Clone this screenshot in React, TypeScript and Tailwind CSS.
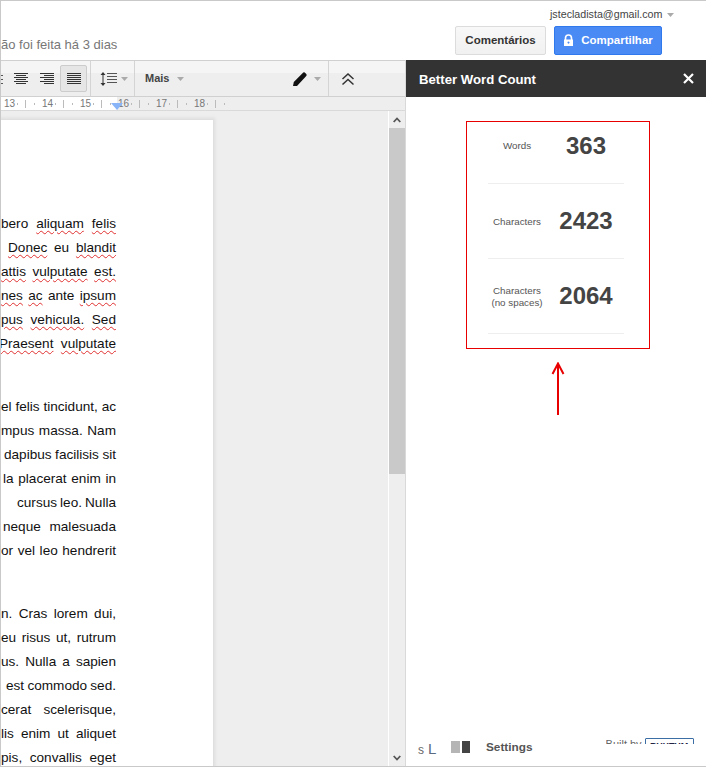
type Line = { pl: string; words: string[] };

// "~" marks a word the spell checker flagged
const paragraphs: Line[][] = [
  [
    { pl: "pl-0", words: ["bero", "~aliquam", "~felis"] },
    { pl: "pl-[7px]", words: ["~Donec", "eu", "~blandit"] },
    { pl: "pl-0", words: ["~attis", "~vulputate", "~est."] },
    { pl: "pl-0", words: ["~nes", "~ac", "ante", "~ipsum"] },
    { pl: "pl-0", words: ["~pus", "~vehicula.", "~Sed"] },
    { pl: "-ml-[2px]", words: ["~Praesent", "~vulputate"] },
  ],
  [
    { pl: "pl-0", words: ["el", "felis", "tincidunt,", "ac"] },
    { pl: "pl-0", words: ["mpus", "massa.", "Nam"] },
    { pl: "pl-[3px]", words: ["dapibus", "facilisis", "sit"] },
    { pl: "pl-[2px]", words: ["la", "placerat", "enim", "in"] },
    { pl: "pl-[16px]", words: ["cursus", "leo.", "Nulla"] },
    { pl: "pl-[2px]", words: ["neque", "malesuada"] },
    { pl: "pl-0", words: ["or", "vel", "leo", "hendrerit"] },
  ],
  [
    { pl: "pl-0", words: ["n.", "Cras", "lorem", "dui,"] },
    { pl: "pl-0", words: ["eu", "risus", "ut,", "rutrum"] },
    { pl: "pl-0", words: ["us.", "Nulla", "a", "sapien"] },
    { pl: "pl-[5px]", words: ["est", "commodo", "sed."] },
    { pl: "pl-0", words: ["cerat", "scelerisque,"] },
    { pl: "pl-0", words: ["lis", "enim", "ut", "aliquet"] },
    { pl: "pl-0", words: ["pis,", "convallis", "eget"] },
  ],
];

const stats = [
  { label: ["Words"], value: "363" },
  { label: ["Characters"], value: "2423" },
  { label: ["Characters", "(no spaces)"], value: "2064" },
];

function Caret({ className = "" }: { className?: string }) {
  return (
    <svg width="7" height="4" viewBox="0 0 7 4" className={className}>
      <path d="M0 0h7L3.500 4z" fill="#aaa" />
    </svg>
  );
}

function AlignIcon({ widths }: { widths: [number, number][] }) {
  return (
    <svg width="14" height="12" viewBox="0 0 14 12" shapeRendering="crispEdges">
      {widths.map(([x, w], i) => (
        <rect key={i} x={x} y={i * 2} width={w} height="1" fill="#333" />
      ))}
    </svg>
  );
}

export default function App() {
  return (
    <div className="w-[706px] h-[767px] flex flex-col overflow-hidden bg-white border-t border-l border-b border-[#c9c9c9] font-['Liberation_Sans',Arial,sans-serif]">
      <header className="h-[59px] shrink-0 flex justify-between">
        <div className="pt-[36px] text-[13px] leading-[15px] text-[#777] whitespace-nowrap">ão foi feita há 3 dias</div>
        <div className="w-[251px] shrink-0 flex flex-col">
          <div className="h-[25px] pt-[7px] pl-[95px] flex items-start gap-[5px] text-[10.700px] leading-[13px] text-[#444]">
            <span>jstecladista@gmail.com</span>
            <Caret className="mt-[5px]" />
          </div>
          <div className="flex gap-[8px]">
            <button className="w-[91px] h-[29px] rounded-[2px] border border-[#dcdcdc] bg-[linear-gradient(#f8f8f8,#f1f1f1)] text-[11.500px] font-bold text-[#333]">Comentários</button>
            <button className="w-[108px] h-[29px] rounded-[2px] border border-[#3079ed] bg-[#4a8af4] text-[11.500px] font-bold text-white flex items-center justify-center gap-[7px]">
              <svg width="11" height="13" viewBox="0 0 11 13">
                <path d="M2.500 6V4a3 3 0 0 1 6 0v2" fill="none" stroke="#fff" strokeWidth="1.600" />
                <path d="M1 5.500h9V12H1z M5.500 7.500a1 1 0 1 0 .01 0z" fill="#fff" fillRule="evenodd" />
              </svg>
              Compartilhar
            </button>
          </div>
        </div>
      </header>

      <div className="flex-1 flex min-h-0">
        <div className="w-[405px] shrink-0 flex flex-col border-r border-[#d9d9d9]">
          <div className="h-[37px] shrink-0 flex items-center border-t border-b border-[#d0d0d0] bg-[linear-gradient(#f5f5f5_35%,#eeeeee_35%)]">
            <div className="w-[13px] h-full overflow-hidden flex items-center justify-start">
              <svg width="3" height="12" viewBox="0 0 3 12" shapeRendering="crispEdges">
                <path d="M0 2.500h2M0 6.500h2M0 10.500h2" stroke="#555" />
              </svg>
            </div>
            <div className="w-[46px] flex gap-[12px]">
              <AlignIcon widths={[[0, 14], [2, 10], [0, 14], [2, 10], [0, 14], [2, 10]]} />
              <AlignIcon widths={[[0, 14], [4, 10], [0, 14], [4, 10], [0, 14], [4, 10]]} />
            </div>
            <div className="w-[27px] h-[27px] flex items-center justify-center rounded-[2px] border border-[#ccc] bg-[#e6e6e6]">
              <AlignIcon widths={[[0, 14], [0, 14], [0, 14], [0, 14], [0, 14], [0, 14]]} />
            </div>
            <div className="ml-[3px] h-full w-[45px] border-l border-r border-[#d4d4d4] flex items-center pl-[9px] gap-[3px]">
              <svg width="18" height="14" viewBox="0 0 18 14">
                <path d="M3 2v10" stroke="#333" strokeWidth="1" />
                <path d="M3 0l2.500 3h-5zM3 14l2.500-3h-5z" fill="#333" />
                <path d="M7 1.500h10M7 4.500h10M7 7.500h10M7 10.500h10" stroke="#555" />
              </svg>
              <Caret />
            </div>
            <div className="w-[194px] h-full border-r border-[#d4d4d4] flex items-center">
              <span className="ml-[10px] text-[11px] font-bold text-[#444]">Mais</span>
              <Caret className="ml-[8px]" />
              <svg width="14" height="14" viewBox="0 0 14 14" className="ml-[109px]">
                <path d="M0 14l.8-4L9.500 1.200a2 2 0 0 1 3 0l.3.3a2 2 0 0 1 0 3L4 14z" fill="#111" />
              </svg>
              <Caret className="ml-[7px]" />
            </div>
            <div className="pl-[12px]">
              <svg width="14" height="14" viewBox="0 0 14 14" fill="none" stroke="#333" strokeWidth="1.500">
                <path d="M1.500 7l5.500-5 5.500 5M1.500 12.500l5.500-5 5.500 5" />
              </svg>
            </div>
          </div>

          <div className="relative h-[14px] shrink-0 flex border-b border-[#d9d9d9] bg-[linear-gradient(to_right,#fff_116px,#eee_116px)] text-[10px] leading-[13px] text-[#777]">
            {["13", "14", "15", "16", "17", "18"].map((n) => (
              <div key={n} className="w-[38px] shrink-0 h-[13px] flex items-center pl-[3px]">
                <span className="w-[13px]">{n}</span>
                <span className="h-[2px] w-px bg-[#bbb]" />
                <span className="h-[8px] w-px bg-[#bbb] ml-[7px]" />
                <span className="h-[2px] w-px bg-[#bbb] ml-[8px]" />
              </div>
            ))}
            <svg width="12" height="7" viewBox="0 0 12 7" className="absolute left-[110px] top-[6px]">
              <path d="M0 0h12L6 7z" fill="#8ab4f8" />
            </svg>
          </div>

          <div className="flex-1 flex min-h-0">
            <div className="flex-1 min-w-0 overflow-hidden bg-[#eeeeee] pt-[9px] border-r border-white">
              <div className="w-[212px] h-[700px] overflow-hidden bg-white shadow-[0_0_3px_2px_#dddddd] pt-[92px] pr-[97px] text-[13.600px] leading-[24px] text-[#111]">
                {paragraphs.map((lines, i) => (
                  <div key={i} className="mb-[39px]">
                    {lines.map((line, j) => (
                      <div key={j} className={`flex justify-between h-[24px] whitespace-nowrap ${line.pl}`}>
                        {line.words.map((w, k) =>
                          w.startsWith("~") ? (
                            <span key={k} className="underline decoration-wavy decoration-[#e03030] decoration-1 underline-offset-2">{w.slice(1)}</span>
                          ) : (
                            <span key={k}>{w}</span>
                          )
                        )}
                      </div>
                    ))}
                  </div>
                ))}
              </div>
            </div>
            <div className="w-[16px] shrink-0 bg-[#eeeeee] flex flex-col">
              <div className="h-[17px] flex items-center justify-center">
                <svg width="8" height="6" viewBox="0 0 8 6" fill="none" stroke="#555" strokeWidth="1.800">
                  <path d="M.7 5L4 1.500 7.300 5" />
                </svg>
              </div>
              <div className="h-[346px] bg-[#c9c9c9]" />
              <div className="flex-1" />
              <div className="h-[16px] flex items-center justify-center">
                <svg width="8" height="6" viewBox="0 0 8 6" fill="none" stroke="#555" strokeWidth="1.800">
                  <path d="M.7 1L4 4.500 7.300 1" />
                </svg>
              </div>
            </div>
          </div>
        </div>

        <aside className="flex-1 flex flex-col min-w-0 bg-white">
          <div className="h-[37px] shrink-0 bg-[#333333] flex items-center justify-between pl-[13px] pr-[12px]">
            <span className="pt-[2px] text-[13.200px] font-bold text-white">Better Word Count</span>
            <svg width="11" height="11" viewBox="0 0 11 11" stroke="#fff" strokeWidth="2.200">
              <path d="M1 1l9 9M10 1l-9 9" />
            </svg>
          </div>

          <div className="ml-[60px] mt-[24px] w-[184px] h-[228px] border border-[#e80000] pl-[21px] pr-[25px] shrink-0">
            {stats.map((s, i) => (
              <div key={s.value} className={`flex items-center border-b border-[#eeeeee] ${i === 0 ? "h-[62px] pb-[14px]" : "h-[75px]"}`}>
                <div className="w-[58px] pt-px text-center text-[9.800px] leading-[12px] text-[#555]">
                  {s.label.map((t) => (
                    <div key={t} className="whitespace-nowrap">{t}</div>
                  ))}
                </div>
                <div className="ml-[2px] flex-1 text-center text-[24px] font-bold text-[#444] leading-[28px]">{s.value}</div>
              </div>
            ))}
          </div>

          <svg width="14" height="53" viewBox="0 0 14 53" className="ml-[145px] mt-[13px] shrink-0" fill="none" stroke="#e80000">
            <path d="M7 2v51" strokeWidth="2" />
            <path d="M1.500 12L7 1.500 12.500 12" strokeWidth="2" />
          </svg>

          <div className="mt-auto h-[28px] pl-[12px] flex items-start shrink-0">
            <div className="w-[33px] pt-[3px] text-[#666] leading-[15px]">
              <span className="text-[12px]">s</span>
              <span className="ml-[4px] text-[15px] text-[#5a6a80] font-light">L</span>
            </div>
            <div className="flex gap-[2px] pt-[3px]">
              <span className="w-[9px] h-[12px] bg-[#b5b5b5]" />
              <span className="w-[8px] h-[12px] bg-[#444]" />
            </div>
            <span className="ml-[16px] pt-[2px] text-[11.800px] leading-[15px] font-bold text-[#555]">Settings</span>
            <div className="ml-[73px] h-[6px] overflow-hidden flex gap-[3px] text-[11px] leading-[13px] text-[#666]">
              <span className="whitespace-nowrap">Built by</span>
              <span className="w-[49px] h-[16px] border border-[#3a6ea5] rounded-[1px] text-center text-[9px] font-bold leading-[14px] text-[#224]">RHYTHM</span>
            </div>
          </div>
        </aside>
      </div>
    </div>
  );
}
